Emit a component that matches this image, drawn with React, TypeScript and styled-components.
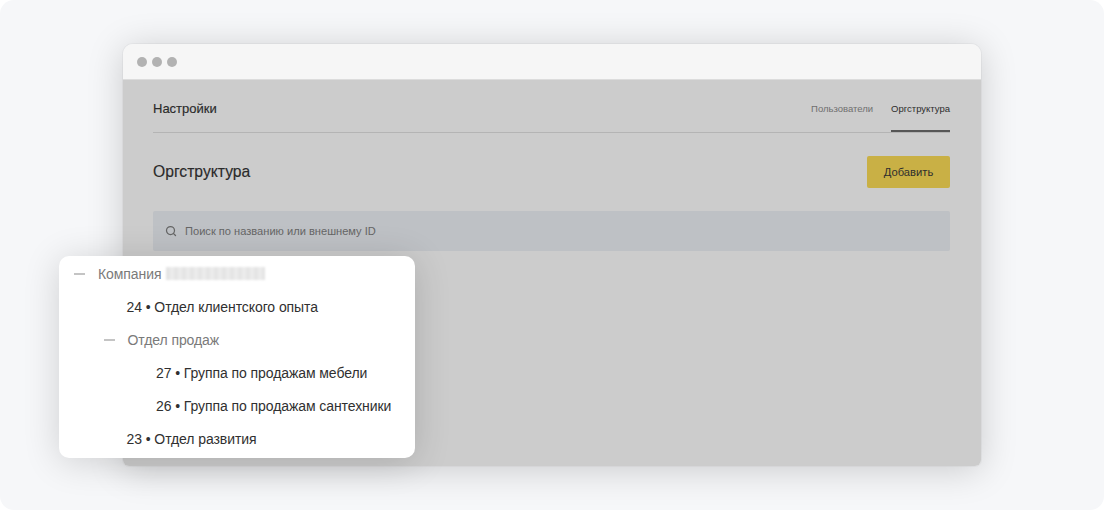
import React from "react";
import styled, { createGlobalStyle } from "styled-components";
import { Search } from "lucide-react";

const GlobalStyle = createGlobalStyle`
  html, body {
    margin: 0;
    padding: 0;
    background: #ffffff;
  }
  body {
    font-family: "Liberation Sans", Arial, sans-serif;
    -webkit-font-smoothing: antialiased;
  }
`;

const Page = styled.div`
  position: relative;
  box-sizing: border-box;
  width: 1104px;
  height: 510px;
  padding: 44px 123px;
  background: #f6f7f9;
  border-radius: 14px;
  overflow: hidden;
`;

const BrowserWindow = styled.div`
  position: relative;
  width: 858px;
  height: 422px;
  border-radius: 10px 10px 6px 6px;
  box-shadow: 0 0 0 1px rgba(0, 0, 0, 0.03), 0 4px 36px rgba(0, 0, 0, 0.18);
`;

const TitleBar = styled.div`
  box-sizing: border-box;
  display: flex;
  align-items: center;
  gap: 5px;
  height: 36px;
  padding: 1px 0 0 14px;
  background: #f6f6f6;
  border-radius: 10px 10px 0 0;
  border-bottom: 1px solid #dcdcdc;
`;

const Dot = styled.span`
  width: 10px;
  height: 10px;
  border-radius: 50%;
  background: #b2b2b2;
`;

const Content = styled.div`
  box-sizing: border-box;
  height: 386px;
  padding: 0 31px 0 30px;
  background: #cccccc;
  border-radius: 0 0 6px 6px;
`;

const Header = styled.div`
  display: flex;
  align-items: stretch;
  justify-content: space-between;
  height: 52px;
  border-bottom: 1px solid #b4b4b4;
`;

const HeaderTitle = styled.div`
  padding-top: 20px;
  font-size: 13px;
  line-height: 18px;
  color: #2a2a2a;
  -webkit-text-stroke: 0.15px #2a2a2a;
`;

const Tabs = styled.div`
  display: flex;
  gap: 18px;
`;

const Tab = styled.div<{ $active?: boolean }>`
  box-sizing: border-box;
  height: 52px;
  padding-top: 21px;
  font-size: 9.5px;
  line-height: 16px;
  color: ${(p) => (p.$active ? "#2c2c2c" : "#6f6f6f")};
  border-bottom: 2px solid ${(p) => (p.$active ? "#565656" : "transparent")};
`;

const TitleRow = styled.div`
  display: flex;
  align-items: center;
  justify-content: space-between;
  margin-top: 23px;
`;

const PageTitle = styled.h1`
  margin: 0;
  font-size: 15.7px;
  font-weight: 400;
  line-height: 24px;
  color: #2a2a2a;
  -webkit-text-stroke: 0.15px #2a2a2a;
`;

const AddButton = styled.button`
  width: 83px;
  height: 32px;
  padding: 0;
  border: none;
  border-radius: 2px;
  background: #c9b045;
  font-family: inherit;
  font-size: 11.2px;
  color: #2e2e2e;
`;

const SearchBox = styled.div`
  display: flex;
  align-items: center;
  gap: 8px;
  height: 40px;
  margin-top: 23px;
  padding-left: 12px;
  border-radius: 2px;
  background: #bec1c5;
  font-size: 11.1px;
  color: #666666;

  svg {
    color: #666666;
  }
`;

const TreeCard = styled.div`
  position: absolute;
  left: -64px;
  top: 212px;
  box-sizing: border-box;
  width: 356px;
  height: 202px;
  padding: 1px 0;
  background: #ffffff;
  border-radius: 10px;
  box-shadow: 0 4px 36px rgba(0, 0, 0, 0.16);
`;

const TreeRow = styled.div<{ $level: number; $muted?: boolean }>`
  display: flex;
  align-items: center;
  height: 33px;
  padding-left: ${(p) => 15 + p.$level * 29.5}px;
  font-size: 14px;
  letter-spacing: -0.08px;
  color: ${(p) => (p.$muted ? "#7a7a7a" : "#303030")};
  white-space: nowrap;
`;

const Collapse = styled.span`
  flex: none;
  width: 11px;
  height: 2px;
  margin-right: 13px;
  background: #c4c4c4;
`;

const Blurred = styled.span`
  width: 99px;
  height: 13px;
  margin-left: 5px;
  background: repeating-linear-gradient(90deg, #e4e4e4 0 4px, #ececec 4px 8px);
  filter: blur(1px);
`;

const Plain = styled.span`
  margin-left: 23px;
`;

const departments = [
  { level: 1, text: "24 • Отдел клиентского опыта" },
  { level: 1, text: "Отдел продаж", group: true },
  { level: 2, text: "27 • Группа по продажам мебели" },
  { level: 2, text: "26 • Группа по продажам сантехники" },
  { level: 1, text: "23 • Отдел развития" },
];

const App: React.FC = () => {
  return (
    <Page>
      <GlobalStyle />
      <BrowserWindow>
        <TitleBar>
          <Dot />
          <Dot />
          <Dot />
        </TitleBar>
        <Content>
          <Header>
            <HeaderTitle>Настройки</HeaderTitle>
            <Tabs>
              <Tab>Пользователи</Tab>
              <Tab $active>Оргструктура</Tab>
            </Tabs>
          </Header>
          <TitleRow>
            <PageTitle>Оргструктура</PageTitle>
            <AddButton>Добавить</AddButton>
          </TitleRow>
          <SearchBox>
            <Search size={12} strokeWidth={2.5} />
            Поиск по названию или внешнему ID
          </SearchBox>
        </Content>
        <TreeCard>
          <TreeRow $level={0} $muted>
            <Collapse />
            Компания
            <Blurred />
          </TreeRow>
          {departments.map((d) => (
            <TreeRow key={d.text} $level={d.level} $muted={d.group}>
              {d.group ? <Collapse /> : null}
              {d.group ? d.text : <Plain>{d.text}</Plain>}
            </TreeRow>
          ))}
        </TreeCard>
      </BrowserWindow>
    </Page>
  );
};

export default App;
